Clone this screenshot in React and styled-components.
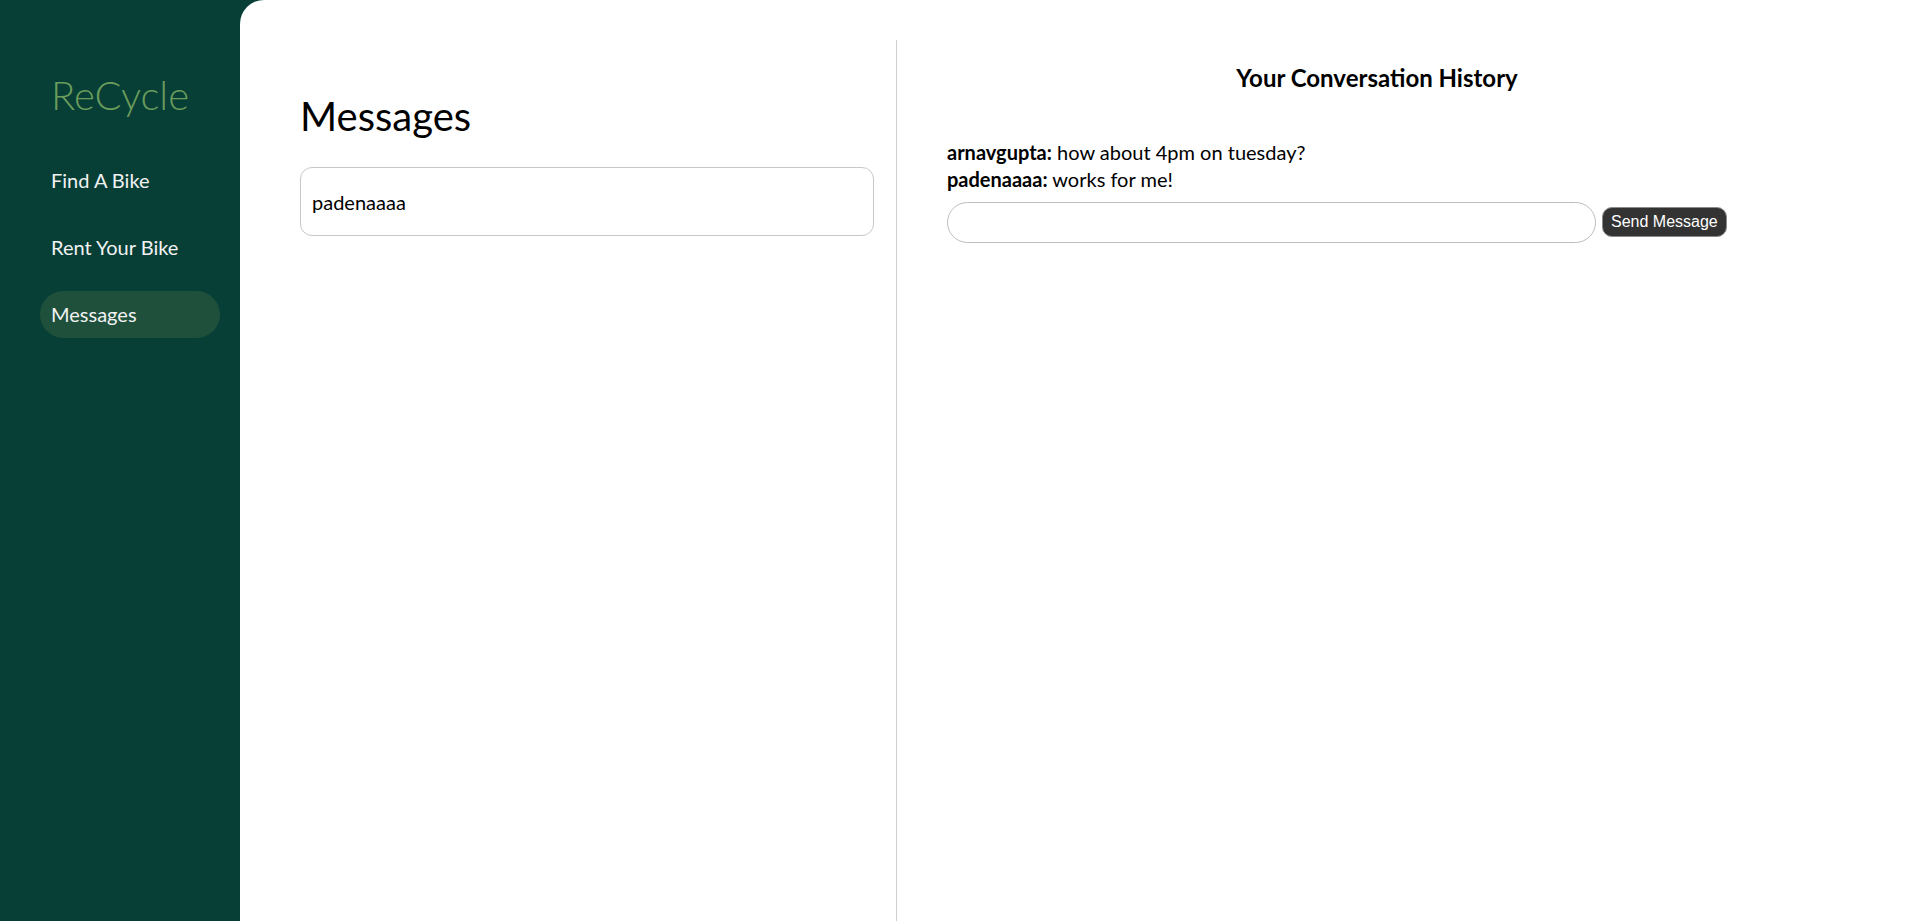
import React, { useState } from 'react';
import styled, { createGlobalStyle } from 'styled-components';

const GlobalStyle = createGlobalStyle`
    * {
        box-sizing: border-box;
    }

    body {
        margin: 0;
        font-family: Lato, "Open Sans", sans-serif;
        color: #000;
        background-color: #073f37;
    }
`;

const navItems = ['Find A Bike', 'Rent Your Bike', 'Messages'];

const conversation = [
    { user: 'arnavgupta', text: 'how about 4pm on tuesday?' },
    { user: 'padenaaaa', text: 'works for me!' },
];

const App = () => {
    const [draft, setDraft] = useState('');

    return (
        <>
            <GlobalStyle />
            <Page>
                <Sidebar>
                    <Logo>ReCycle</Logo>
                    <Nav>
                        {navItems.map(item => (
                            <NavLink key={item} $active={item === 'Messages'}>{item}</NavLink>
                        ))}
                    </Nav>
                </Sidebar>

                <Main>
                    <ContactsPanel>
                        <PageTitle>Messages</PageTitle>
                        <ContactCard>padenaaaa</ContactCard>
                    </ContactsPanel>

                    <ChatPanel>
                        <ChatTitle>Your Conversation History</ChatTitle>
                        <MessageList>
                            {conversation.map((msg, i) => (
                                <MessageLine key={i}>
                                    <strong>{msg.user}:</strong> {msg.text}
                                </MessageLine>
                            ))}
                        </MessageList>
                        <Composer>
                            <MessageInput type='text' value={draft} onChange={(e) => setDraft(e.target.value)} />
                            <SendButton>Send Message</SendButton>
                        </Composer>
                    </ChatPanel>
                </Main>
            </Page>
        </>
    );
};

const Page = styled.div`
    display: flex;
    min-height: 1010px;
    background-color: #073f37;
`;

const Sidebar = styled.aside`
    width: 240px;
    flex-shrink: 0;
    display: flex;
    flex-direction: column;
    padding-top: 71px;
`;

const Logo = styled.h1`
    margin: 0;
    text-align: center;
    font-size: 40px;
    font-weight: 300;
    line-height: 1.2;
    color: #6a9c5a;
`;

const Nav = styled.nav`
    display: flex;
    flex-direction: column;
    gap: 20px;
    margin-top: 38px;
    padding-left: 40px;
`;

const NavLink = styled.a`
    display: block;
    width: 180px;
    height: 47px;
    padding: 0 11px;
    border-radius: 24px;
    font-size: 20px;
    line-height: 47px;
    color: #f2f2f2;
    background-color: ${props => props.$active ? '#1e503c' : 'transparent'};
    cursor: pointer;
`;

const Main = styled.main`
    flex: 1;
    display: flex;
    background-color: #fff;
    border-top-left-radius: 24px;
`;

const ContactsPanel = styled.section`
    width: 657px;
    flex-shrink: 0;
    margin-top: 40px;
    padding: 0 22px 0 60px;
    border-right: 1px solid #cfcfcf;
`;

const PageTitle = styled.h2`
    margin: 52px 0 27px 0;
    font-size: 40px;
    font-weight: 400;
    line-height: 1.2;
`;

const ContactCard = styled.div`
    display: flex;
    align-items: center;
    height: 69px;
    padding: 0 11px;
    border: 1px solid #c8c8c8;
    border-radius: 12px;
    font-size: 20px;
    cursor: pointer;
`;

const ChatPanel = styled.section`
    flex: 1;
    padding: 0 113px 0 50px;
`;

const ChatTitle = styled.h3`
    margin: 64px 0 46px 0;
    text-align: center;
    font-size: 24px;
    font-weight: 700;
    line-height: 1.2;
`;

const MessageList = styled.div`
    display: flex;
    flex-direction: column;
`;

const MessageLine = styled.p`
    margin: 0;
    font-size: 20px;
    line-height: 27px;
`;

const Composer = styled.div`
    display: flex;
    align-items: center;
    gap: 6px;
    margin-top: 9px;
`;

const MessageInput = styled.input`
    width: 649px;
    height: 41px;
    padding: 0 16px;
    border: 1px solid #bdbdbd;
    border-radius: 21px;
    font-family: Lato, sans-serif;
    font-size: 18px;
    outline: none;
`;

const SendButton = styled.button`
    height: 30px;
    padding: 0 8px;
    border: 1px solid #8a8a8a;
    border-radius: 10px;
    background-color: #333;
    color: #fff;
    font-family: "Liberation Sans", Arial, sans-serif;
    font-size: 16px;
    cursor: pointer;
`;

export default App;
